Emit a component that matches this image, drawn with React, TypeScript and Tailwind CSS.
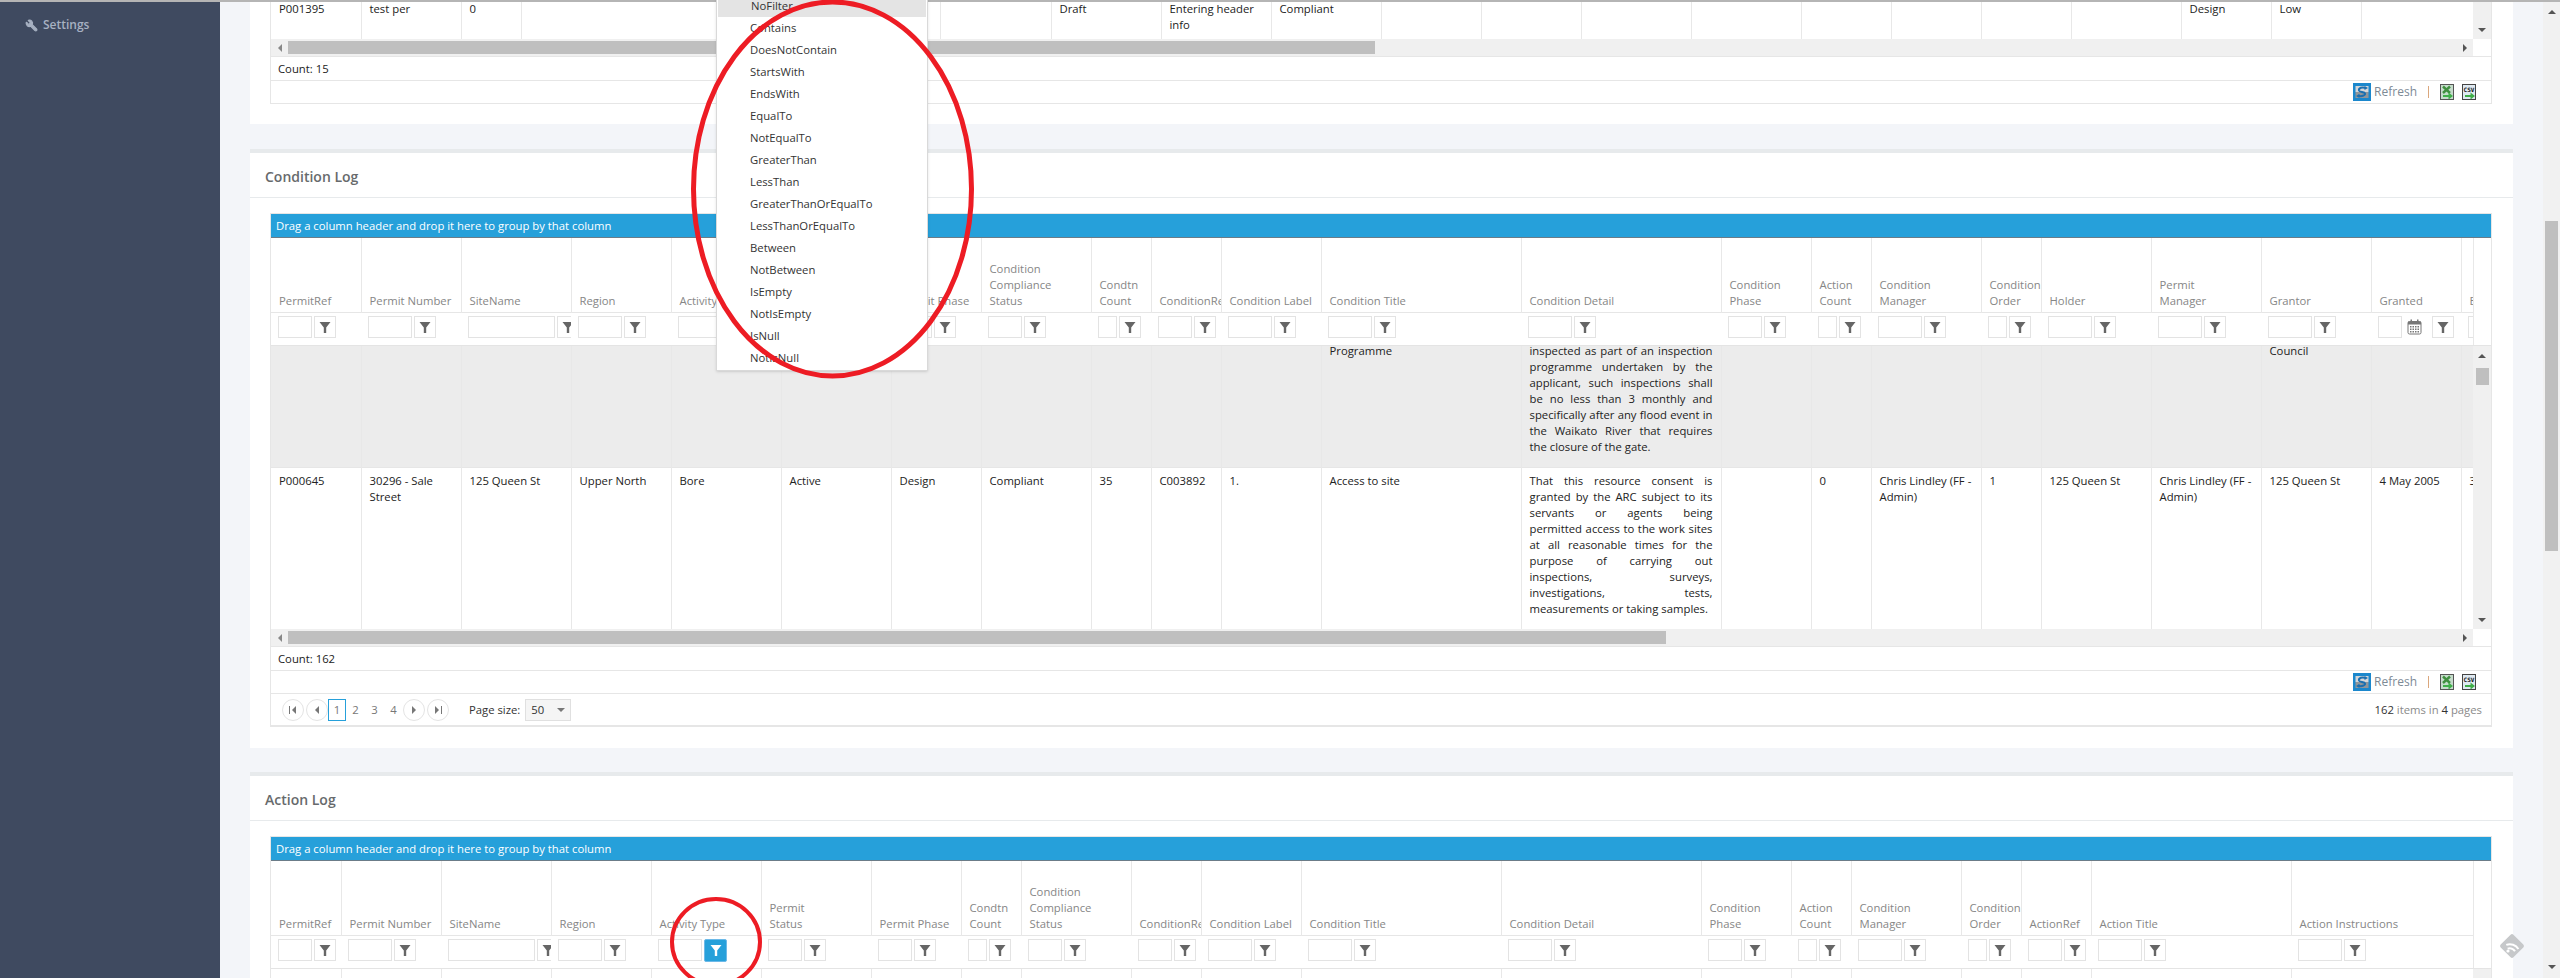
import { Wrench } from 'lucide-react';

type Column = { title: string; w: number; input?: number; calendar?: boolean; active?: boolean };

const conditionColumns: Column[] = [
  { title: 'PermitRef', w: 90, input: 34 },
  { title: 'Permit Number', w: 100, input: 44 },
  { title: 'SiteName', w: 110, input: 87 },
  { title: 'Region', w: 100, input: 44 },
  { title: 'Activity Type', w: 110, input: 44 },
  { title: 'Permit\nStatus', w: 110, input: 34 },
  { title: 'Permit Phase', w: 90, input: 34 },
  { title: 'Condition\nCompliance\nStatus', w: 110, input: 34 },
  { title: 'Condtn\nCount', w: 60, input: 19 },
  { title: 'ConditionRef', w: 70, input: 34 },
  { title: 'Condition Label', w: 100, input: 44 },
  { title: 'Condition Title', w: 200, input: 44 },
  { title: 'Condition Detail', w: 200, input: 44 },
  { title: 'Condition\nPhase', w: 90, input: 34 },
  { title: 'Action\nCount', w: 60, input: 19 },
  { title: 'Condition\nManager', w: 110, input: 44 },
  { title: 'Condition\nOrder', w: 60, input: 19 },
  { title: 'Holder', w: 110, input: 44 },
  { title: 'Permit\nManager', w: 110, input: 44 },
  { title: 'Grantor', w: 110, input: 44 },
  { title: 'Granted', w: 90, input: 24, calendar: true },
  { title: 'Expiry', w: 90, input: 44 },
];

const actionColumns: Column[] = [
  { title: 'PermitRef', w: 70, input: 34 },
  { title: 'Permit Number', w: 100, input: 44 },
  { title: 'SiteName', w: 110, input: 87 },
  { title: 'Region', w: 100, input: 44 },
  { title: 'Activity Type', w: 110, input: 44, active: true },
  { title: 'Permit\nStatus', w: 110, input: 34 },
  { title: 'Permit Phase', w: 90, input: 34 },
  { title: 'Condtn\nCount', w: 60, input: 19 },
  { title: 'Condition\nCompliance\nStatus', w: 110, input: 34 },
  { title: 'ConditionRef', w: 70, input: 34 },
  { title: 'Condition Label', w: 100, input: 44 },
  { title: 'Condition Title', w: 200, input: 44 },
  { title: 'Condition Detail', w: 200, input: 44 },
  { title: 'Condition\nPhase', w: 90, input: 34 },
  { title: 'Action\nCount', w: 60, input: 19 },
  { title: 'Condition\nManager', w: 110, input: 44 },
  { title: 'Condition\nOrder', w: 60, input: 19 },
  { title: 'ActionRef', w: 70, input: 34 },
  { title: 'Action Title', w: 200, input: 44 },
  { title: 'Action Instructions', w: 200, input: 44 },
];

const topWidths = [90, 100, 60, 419, 111, 110, 110, 110, 100, 100, 110, 110, 90, 90, 90, 110, 90, 90];
const topRow: Record<number, string> = {
  0: 'P001395',
  1: 'test per',
  2: '0',
  5: 'Draft',
  6: 'Entering header info',
  7: 'Compliant',
  16: 'Design',
  17: 'Low',
};

const grayRow: Record<number, string> = {
  11: 'Programme',
  12: 'inspected as part of an inspection programme undertaken by the applicant, such inspections shall be no less than 3 monthly and specifically after any flood event in the Waikato River that requires the closure of the gate.',
  19: 'Council',
};

const whiteRow: Record<number, string> = {
  0: 'P000645',
  1: '30296 - Sale Street',
  2: '125 Queen St',
  3: 'Upper North',
  4: 'Bore',
  5: 'Active',
  6: 'Design',
  7: 'Compliant',
  8: '35',
  9: 'C003892',
  10: '1.',
  11: 'Access to site',
  12: 'That this resource consent is granted by the ARC subject to its servants or agents being permitted access to the work sites at all reasonable times for the purpose of carrying out inspections, surveys, investigations, tests, measurements or taking samples.',
  14: '0',
  15: 'Chris Lindley (FF - Admin)',
  16: '1',
  17: '125 Queen St',
  18: 'Chris Lindley (FF - Admin)',
  19: '125 Queen St',
  20: '4 May 2005',
  21: '3',
};

const filterOptions = [
  'NoFilter',
  'Contains',
  'DoesNotContain',
  'StartsWith',
  'EndsWith',
  'EqualTo',
  'NotEqualTo',
  'GreaterThan',
  'LessThan',
  'GreaterThanOrEqualTo',
  'LessThanOrEqualTo',
  'Between',
  'NotBetween',
  'IsEmpty',
  'NotIsEmpty',
  'IsNull',
  'NotIsNull',
];

function Arrow({ dir, className = 'text-[#555]' }: { dir: 'up' | 'down' | 'left' | 'right'; className?: string }) {
  const points = {
    up: '0,5 8,5 4,1',
    down: '0,1 8,1 4,5',
    left: '5,0 5,8 1,4',
    right: '1,0 1,8 5,4',
  }[dir];
  const vertical = dir === 'up' || dir === 'down';
  return (
    <svg width={vertical ? 8 : 6} height={vertical ? 6 : 8} viewBox={vertical ? '0 0 8 6' : '0 0 6 8'} className={className}>
      <polygon points={points} fill="currentColor" />
    </svg>
  );
}

function FunnelIcon({ white }: { white?: boolean }) {
  return (
    <svg width="12" height="14" viewBox="0 0 12 14" className={white ? 'text-white' : 'text-[#666]'}>
      <polygon points="0.5,2 11.5,2 7.2,7.5 7.2,13 4.8,13 4.8,7.5" fill="currentColor" />
    </svg>
  );
}

function CalendarIcon() {
  return (
    <svg width="15" height="16" viewBox="0 0 15 16" className="text-[#777]">
      <rect x="1" y="2.5" width="13" height="12.5" rx="1.5" fill="none" stroke="currentColor" />
      <rect x="1" y="2.5" width="13" height="3" fill="currentColor" />
      <rect x="3.5" y="0.5" width="1.5" height="3" fill="currentColor" />
      <rect x="10" y="0.5" width="1.5" height="3" fill="currentColor" />
      {[7, 9.5, 12].map((y) =>
        [3, 5.5, 8, 10.5].map((x) => <rect key={`${x}-${y}`} x={x} y={y} width="1.5" height="1.5" fill="currentColor" />)
      )}
    </svg>
  );
}

function RefreshIcon() {
  return (
    <span className="flex h-[18px] w-[18px] items-center justify-center bg-[#1b87cc]">
      <svg width="14" height="14" viewBox="0 0 14 14">
        <rect x="0.5" y="1" width="13" height="6" fill="#d4d6d8" />
        <rect x="0.5" y="7" width="13" height="6" fill="#8f959a" />
        <path d="M11 3 C7 1.5 3.5 3 4 5.5 C4.5 7.5 9.5 6.5 10 8.5 C10.4 10.5 6.5 12 3 10.5" fill="none" stroke="#1b6fb0" strokeWidth="2" />
        <polygon points="9.5,1 13,3 9.5,5" fill="#1b6fb0" />
        <polygon points="4.5,9 1,11 4.5,13" fill="#1b6fb0" />
      </svg>
    </span>
  );
}

function ExcelIcon() {
  return (
    <svg width="14" height="16" viewBox="0 0 14 16">
      <rect x="0.5" y="0.5" width="13" height="15" fill="#c5dccb" stroke="#555" />
      <path d="M3 2.5 L10 9 M10 2.5 L3 9" stroke="#3f8f3f" strokeWidth="2.4" />
      <rect x="3" y="11" width="6" height="2" fill="#3fae49" />
      <polygon points="8.5,8.5 13,12 8.5,15.5" fill="#3fae49" />
    </svg>
  );
}

function CsvIcon() {
  return (
    <svg width="14" height="16" viewBox="0 0 14 16">
      <rect x="0.5" y="0.5" width="13" height="15" fill="#dfe9f1" stroke="#444" />
      <text x="7" y="7.5" textAnchor="middle" fontSize="6" fontWeight="700" fontFamily="'DejaVu Sans Mono', monospace" fill="#111">
        CSV
      </text>
      <rect x="3" y="11" width="6" height="2" fill="#3fae49" />
      <polygon points="8.5,8.5 13,12 8.5,15.5" fill="#3fae49" />
    </svg>
  );
}

function Toolbar() {
  return (
    <div className="flex h-[23px] items-center justify-end border-b border-[#e6e6e6] pr-[15px]">
      <RefreshIcon />
      <span className="ml-[3px] text-[12px] text-[#7d8a96]">Refresh</span>
      <span className="mx-[11px] h-[12px] w-px bg-[#dba77c]" />
      <ExcelIcon />
      <span className="ml-[8px]">
        <CsvIcon />
      </span>
    </div>
  );
}

function Cols({ widths }: { widths: number[] }) {
  return (
    <colgroup>
      {widths.map((w, i) => (
        <col key={i} style={{ width: w }} />
      ))}
    </colgroup>
  );
}

function HeaderTables({ columns }: { columns: Column[] }) {
  const widths = columns.map((c) => c.w);
  const total = widths.reduce((a, b) => a + b, 0);
  return (
    <div className="flex border-b border-[#e4e4e4]">
      <div className="min-w-0 flex-1 overflow-hidden">
        <table className="table-fixed border-collapse" style={{ width: total }}>
          <Cols widths={widths} />
          <thead>
            <tr className="h-[74px] border-b border-[#e6e6e6]">
              {columns.map((c) => (
                <th
                  key={c.title}
                  className="overflow-hidden border-r border-[#e8e8e8] pr-0 pb-[3px] pl-[8px] text-left align-bottom font-normal whitespace-pre text-[#868686]"
                >
                  {c.title}
                </th>
              ))}
            </tr>
            <tr className="h-[33px]">
              {columns.map((c) => (
                <th key={c.title} className="overflow-hidden p-0 font-normal">
                  <div className="flex items-center pb-[3px] pl-[7px]">
                    <span className="h-[22px] shrink-0 border border-[#e3e3e3] bg-white" style={{ width: c.input }} />
                    {c.calendar && (
                      <span className="mr-[8px] ml-[5px] flex shrink-0">
                        <CalendarIcon />
                      </span>
                    )}
                    <span
                      className={
                        c.active
                          ? 'ml-[2px] flex h-[23px] w-[23px] shrink-0 items-center justify-center rounded-[2px] border border-[#6cb9e8] bg-[#26a0da]'
                          : 'ml-[2px] flex h-[22px] w-[22px] shrink-0 items-center justify-center border border-[#e3e3e3] bg-white'
                      }
                    >
                      <FunnelIcon white={c.active} />
                    </span>
                  </div>
                </th>
              ))}
            </tr>
          </thead>
        </table>
      </div>
      <div className="w-[18px] shrink-0 border-l border-[#e8e8e8] bg-white" />
    </div>
  );
}

function HScroll({ thumb }: { thumb: number }) {
  return (
    <div className="flex h-[18px] border-b border-[#e6e6e6]">
      <div className="flex min-w-0 flex-1 items-center bg-[#f0f0f0]">
        <div className="flex w-[17px] shrink-0 items-center justify-center">
          <Arrow dir="left" className="text-[#888]" />
        </div>
        <div className="h-[13px] shrink-0 bg-[#bfbfbf]" style={{ width: thumb }} />
        <div className="ml-auto flex w-[17px] shrink-0 items-center justify-center">
          <Arrow dir="right" />
        </div>
      </div>
      <div className="w-[18px] shrink-0 bg-white" />
    </div>
  );
}

function VScrollDown() {
  return (
    <div className="flex w-[18px] shrink-0 flex-col items-center justify-end bg-[#f0f0f0] pb-[6px]">
      <Arrow dir="down" />
    </div>
  );
}

function CountBar({ count }: { count: number }) {
  return <div className="flex h-[24px] items-center border-b border-[#e6e6e6] pl-[7px] text-[#222]">Count: {count}</div>;
}

function Pager() {
  return (
    <div className="flex h-[33px] items-center border-b-2 border-[#e6e6e6] pr-[9px] pl-[11px] text-[#777]">
      <span className="flex h-[22px] w-[22px] items-center justify-center rounded-full border border-[#e4e4e4]">
        <span className="mr-px h-[8px] w-px bg-[#777]" />
        <Arrow dir="left" className="text-[#777]" />
      </span>
      <span className="ml-[2px] flex h-[22px] w-[22px] items-center justify-center rounded-full border border-[#e4e4e4]">
        <Arrow dir="left" className="text-[#777]" />
      </span>
      <span className="flex h-[22px] w-[18px] items-center justify-center border border-[#26a0da]">1</span>
      <span className="w-[19px] text-center">2</span>
      <span className="w-[19px] text-center">3</span>
      <span className="w-[19px] text-center">4</span>
      <span className="flex h-[22px] w-[22px] items-center justify-center rounded-full border border-[#e4e4e4]">
        <Arrow dir="right" className="text-[#777]" />
      </span>
      <span className="ml-[2px] flex h-[22px] w-[22px] items-center justify-center rounded-full border border-[#e4e4e4]">
        <Arrow dir="right" className="text-[#777]" />
        <span className="ml-px h-[8px] w-px bg-[#777]" />
      </span>
      <span className="ml-[20px] text-[#333]">Page size:</span>
      <span className="ml-[5px] flex h-[22px] w-[46px] items-center justify-between border border-[#e0e0e0] bg-[#f5f5f5] pr-[5px] pl-[5px] text-[#333]">
        50
        <Arrow dir="down" className="text-[#777]" />
      </span>
      <span className="ml-auto text-[#8a8a8a]">
        <span className="text-[#333]">162</span> items in <span className="text-[#333]">4</span> pages
      </span>
    </div>
  );
}

function BodyRow({ widths, values, className }: { widths: number[]; values: Record<number, string>; className: string }) {
  const total = widths.reduce((a, b) => a + b, 0);
  return (
    <table className={`table-fixed border-collapse ${className}`} style={{ width: total }}>
      <Cols widths={widths} />
      <tbody>
        <tr>
          {widths.map((_, i) => (
            <td
              key={i}
              className={`overflow-hidden border-r border-[#e8e8e8] px-[8px] align-top text-[#222] ${i === 12 ? 'text-justify' : ''}`}
            >
              {values[i] ?? ''}
            </td>
          ))}
        </tr>
      </tbody>
    </table>
  );
}

function DragBar() {
  return (
    <div className="flex h-[24px] items-center border-b border-[#6b7c88] bg-[#26a0da] pl-[5px] text-white">
      Drag a column header and drop it here to group by that column
    </div>
  );
}

function TopGrid() {
  return (
    <div className="border-x border-[#e6e6e6]">
      <div className="flex h-[37px]">
        <div className="min-w-0 flex-1 overflow-hidden">
          <BodyRow widths={topWidths} values={topRow} className="-mt-px h-[38px]" />
        </div>
        <VScrollDown />
      </div>
      <HScroll thumb={1087} />
      <CountBar count={15} />
      <Toolbar />
    </div>
  );
}

function ConditionGrid() {
  const widths = conditionColumns.map((c) => c.w);
  return (
    <div className="border-x border-t border-[#e6e6e6]">
      <DragBar />
      <HeaderTables columns={conditionColumns} />
      <div className="flex h-[283px]">
        <div className="min-w-0 flex-1 overflow-hidden">
          <BodyRow widths={widths} values={grayRow} className="-mt-[3px] h-[124px] bg-[#ececec]" />
          <BodyRow widths={widths} values={whiteRow} className="h-[162px] border-t border-[#e6e6e6] [&_td]:pt-[5px]" />
        </div>
        <div className="flex w-[18px] shrink-0 flex-col items-center bg-[#f0f0f0]">
          <div className="mt-[7px]">
            <Arrow dir="up" />
          </div>
          <div className="mt-[9px] h-[17px] w-[13px] bg-[#bfbfbf]" />
          <div className="mt-auto mb-[6px]">
            <Arrow dir="down" />
          </div>
        </div>
      </div>
      <HScroll thumb={1378} />
      <CountBar count={162} />
      <Toolbar />
      <Pager />
    </div>
  );
}

function ActionGrid() {
  const widths = actionColumns.map((c) => c.w);
  return (
    <div className="h-[200px] border-x border-t border-[#e6e6e6]">
      <DragBar />
      <HeaderTables columns={actionColumns} />
      <div className="flex">
        <div className="min-w-0 flex-1 overflow-hidden">
          <BodyRow widths={widths} values={{}} className="h-[20px]" />
        </div>
        <div className="h-[20px] w-[18px] shrink-0 bg-[#f0f0f0]" />
      </div>
    </div>
  );
}

function PanelHeader({ title }: { title: string }) {
  return (
    <div className="flex h-[49px] items-center border-t-4 border-b border-t-[#e7eaec] border-b-[#e7eaec] pl-[15px] text-[14px] text-[#676a6c]">
      <span className="mt-[3px] font-semibold">{title}</span>
    </div>
  );
}

export default function App() {
  return (
    <div className="relative flex h-[978px] w-[2560px] flex-col overflow-hidden bg-[#f3f5f9] font-['Open_Sans',sans-serif] text-[11.3px] leading-[16px]">
      <div className="h-[2px] shrink-0 bg-[#b5b5b5]" />
      <div className="flex min-h-0 flex-1">
        {/* Sidebar */}
        <aside className="w-[220px] shrink-0 bg-[#3f4a60]">
          <div className="mt-[15px] flex items-center pl-[25px] text-[12px] font-semibold text-[#a7b1c2]">
            <Wrench className="h-[13px] w-[13px] -scale-x-100 fill-current" />
            <span className="ml-[5px]">Settings</span>
          </div>
        </aside>

        {/* Main content */}
        <main className="min-w-0 flex-1 overflow-hidden px-[30px]">
          <section className="bg-white pr-[21px] pb-[20px] pl-[20px]">
            <TopGrid />
          </section>

          <section className="mt-[25px] bg-white">
            <PanelHeader title="Condition Log" />
            <div className="pt-[15px] pr-[21px] pb-[21px] pl-[20px]">
              <ConditionGrid />
            </div>
          </section>

          <section className="mt-[24px] bg-white">
            <PanelHeader title="Action Log" />
            <div className="pt-[15px] pr-[21px] pl-[20px]">
              <ActionGrid />
            </div>
          </section>
        </main>

        {/* Page scrollbar */}
        <div className="flex w-[17px] shrink-0 flex-col items-center bg-[#f1f1f1]">
          <div className="mt-[7px]">
            <Arrow dir="up" />
          </div>
          <div className="mt-[206px] h-[330px] w-[13px] bg-[#bfbfbf]" />
          <div className="mt-auto mb-[8px]">
            <Arrow dir="down" />
          </div>
        </div>
      </div>

      {/* Filter menu */}
      <div className="absolute top-[-7px] left-[716px] w-[212px] border border-[#d9d9d9] bg-white py-px shadow-sm">
        {filterOptions.map((option, i) => (
          <div key={option} className={`flex h-[22px] items-center pl-[33px] text-[#333] ${i === 0 ? 'mx-px bg-[#e4e4e4]' : ''}`}>
            {option}
          </div>
        ))}
      </div>

      {/* Hand-drawn annotations */}
      <svg width="300" height="400" className="pointer-events-none absolute top-0 left-[685px]">
        <ellipse cx="147.5" cy="189" rx="139" ry="187" fill="none" stroke="#ed1c24" strokeWidth="5" />
      </svg>
      <svg width="110" height="90" className="pointer-events-none absolute top-[892px] left-[662px]">
        <ellipse cx="54" cy="50" rx="44" ry="43" fill="none" stroke="#ed1c24" strokeWidth="4" />
      </svg>

      {/* Floating badge */}
      <svg width="30" height="30" viewBox="0 0 30 30" className="pointer-events-none absolute top-[931px] left-[2497px]">
        <rect x="6" y="6" width="18" height="18" rx="2" transform="rotate(45 15 15)" fill="#c6c8ca" />
        <path d="M10 12 A10 10 0 0 1 20 20" fill="none" stroke="#fff" strokeWidth="2" transform="rotate(-20 15 15)" />
        <path d="M10 16 A6 6 0 0 1 16 21" fill="none" stroke="#fff" strokeWidth="2" transform="rotate(-20 15 15)" />
        <circle cx="11" cy="20" r="1.6" fill="#fff" />
      </svg>
    </div>
  );
}
